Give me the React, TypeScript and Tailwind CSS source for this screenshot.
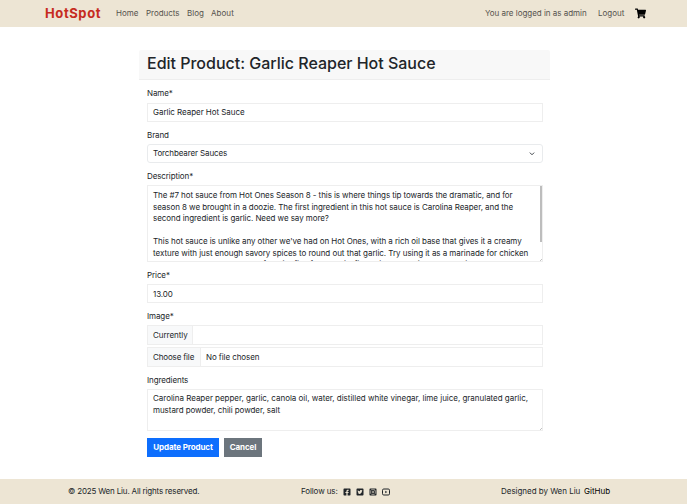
import React from "react";
import { FaShoppingCart, FaFacebookSquare, FaTwitterSquare, FaInstagramSquare } from "react-icons/fa";

const descriptionLines: [string, string][] = [
  ["The #7 hot sauce from Hot Ones Season 8 - this is where things tip towards the dramatic, and for", "tracking-[-0.08px]"],
  ["season 8 we brought in a doozie. The first ingredient in this hot sauce is Carolina Reaper, and the", "tracking-[-0.065px]"],
  ["second ingredient is garlic. Need we say more?", "tracking-[-0.065px]"],
  ["\u00a0", ""],
  ["This hot sauce is unlike any other we've had on Hot Ones, with a rich oil base that gives it a creamy", "tracking-[-0.06px]"],
  ["texture with just enough savory spices to round out that garlic. Try using it as a marinade for chicken", "tracking-[-0.045px]"],
  ["or pork, or add some to your favorite fish for a garlic-filled kick. You will not regret it.", ""],
];

function Label({ children, className }: { children: React.ReactNode; className: string }) {
  return <div className={`flex items-center tracking-[-0.1px] whitespace-nowrap ${className}`}>{children}</div>;
}

function ResizeGrip() {
  return (
    <svg className="absolute right-0 bottom-0 size-[2px]" viewBox="0 0 2 2">
      <path d="M2 0 0 2" stroke="#999" strokeWidth=".6" />
    </svg>
  );
}

function VideoIcon() {
  return (
    <svg className="h-[8px] w-[8px]" viewBox="0 0 16 16">
      <rect x="1" y="2" width="14" height="12" rx="2.5" fill="none" stroke="currentColor" strokeWidth="2" />
      <path d="m6.5 5.5 4 2.5-4 2.5z" fill="currentColor" />
    </svg>
  );
}

export default function App() {
  return (
    <div className="flex h-[504px] w-[687px] flex-col overflow-hidden bg-white font-[Inter,sans-serif] text-[8px] leading-[11.5px] text-[#212529]">
      <nav className="flex h-[27px] shrink-0 items-center bg-[#ede5d4] pr-[41px] pl-[45px] whitespace-nowrap text-[#55524d]">
        <span className="w-[71px] text-[13px] font-bold tracking-[0.6px] text-[#c62b20]">HotSpot</span>
        <span className="w-[30px]">Home</span>
        <span className="w-[41px] tracking-[-0.05px]">Products</span>
        <span className="w-[24px]">Blog</span>
        <span className="tracking-[0.05px]">About</span>
        <span className="ml-auto w-[113px] tracking-[-0.02px]">You are logged in as admin</span>
        <span className="w-[37px]">Logout</span>
        <FaShoppingCart className="size-[11px] text-black" />
      </nav>

      <main className="ml-[139px] flex w-[411px] flex-1 flex-col pt-[23px]">
        <div className="flex h-[30px] shrink-0 items-center rounded-t-[2px] border-b border-[#eeeeee] bg-[#f8f8f8] pb-[2px] pl-[8px] text-[16px] font-medium tracking-[-0.01px] whitespace-nowrap">
          Edit Product: Garlic Reaper Hot Sauce
        </div>
        <div className="flex flex-col pr-[7px] pl-[8px]">
          <Label className="h-[23px] pt-[4px]">Name*</Label>
          <div className="flex h-[19px] items-center border border-[#eeeeee] pl-[5px] tracking-[-0.04px]">Garlic Reaper Hot Sauce</div>

          <Label className="h-[22px] pt-[6px]">Brand</Label>
          <div className="flex h-[19px] items-center justify-between rounded-[3px] border border-[#e9ebed] pr-[7px] pl-[5px] tracking-[-0.12px]">
            Torchbearer Sauces
            <svg className="size-[6px]" viewBox="0 0 16 16" fill="none">
              <path d="m3 5 5 5 5-5" stroke="#343a40" strokeWidth="2.5" strokeLinecap="round" strokeLinejoin="round" />
            </svg>
          </div>

          <Label className="h-[22px] pt-[6px]">Description*</Label>
          <div className="relative h-[77px] overflow-hidden border border-[#eeeeee] pt-[4px] pl-[5px] whitespace-nowrap">
            {descriptionLines.map(([line, style], i) => (
              <div key={i}><span className={style}>{line}</span></div>
            ))}
            <div className="absolute top-0 right-0 h-[56px] w-[2px] bg-[#bdbdbd]" />
            <ResizeGrip />
          </div>

          <Label className="h-[22px] pt-[6px]">Price*</Label>
          <div className="flex h-[19px] items-center border border-[#eeeeee] pt-[2px] pl-[5px] tracking-[-0.1px]">13.00</div>

          <Label className="h-[22px] pt-[6px]">Image*</Label>
          <div className="flex h-[20px] border border-[#eeeeee]">
            <div className="flex w-[45px] items-center border-r border-[#eeeeee] bg-[#f8f9fa] pt-[2px] pl-[5px] tracking-[-0.05px]">Currently</div>
          </div>
          <div className="mt-[2px] flex h-[20px] border border-[#eeeeee]">
            <div className="flex w-[53px] items-center border-r border-[#eeeeee] bg-[#f8f9fa] pt-[2px] pl-[5px] tracking-[-0.15px]">Choose file</div>
            <div className="flex items-center pt-[2px] pl-[5px] tracking-[-0.08px]">No file chosen</div>
          </div>

          <Label className="h-[22px] pt-[6px]">Ingredients</Label>
          <div className="relative h-[42px] border border-[#eeeeee] pt-[3px] pl-[5px] whitespace-nowrap">
            <div className="tracking-[-0.022px]">Carolina Reaper pepper, garlic, canola oil, water, distilled white vinegar, lime juice, granulated garlic,</div>
            <div className="tracking-[-0.06px]">mustard powder, chili powder, salt</div>
            <ResizeGrip />
          </div>

          <div className="mt-[7px] flex gap-[5px] font-bold tracking-[-0.1px] whitespace-nowrap text-white">
            <button className="h-[19px] w-[72px] bg-[#0d6efd]">Update Product</button>
            <button className="h-[19px] w-[38px] bg-[#6c757d]">Cancel</button>
          </div>
        </div>
      </main>

      <footer className="flex h-[25px] shrink-0 items-center bg-[#ede5d4] pl-[68px] whitespace-nowrap">
        <span className="w-[233px] tracking-[-0.17px]">© 2025 Wen Liu. All rights reserved.</span>
        <span className="w-[42px] tracking-[-0.12px]">Follow us:</span>
        <span className="flex w-[158px] items-center gap-[5px]">
          <FaFacebookSquare className="size-[8px]" />
          <FaTwitterSquare className="size-[8px]" />
          <FaInstagramSquare className="size-[8px]" />
          <VideoIcon />
        </span>
        <span className="w-[83px] tracking-[-0.03px]">Designed by Wen Liu</span>
        <span className="text-black">GitHub</span>
      </footer>
    </div>
  );
}
